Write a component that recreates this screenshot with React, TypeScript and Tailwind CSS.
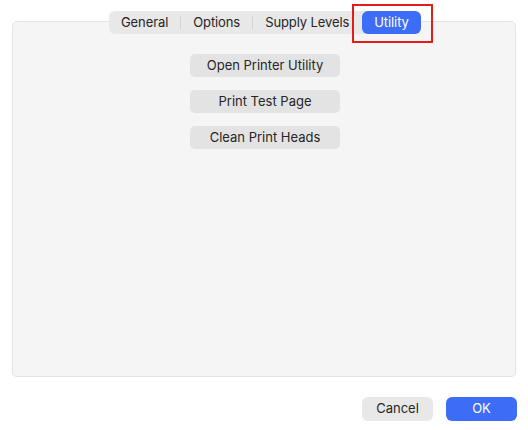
import { useState } from 'react';

const tabs = ['General', 'Options', 'Supply Levels', 'Utility'];
const actions = ['Open Printer Utility', 'Print Test Page', 'Clean Print Heads'];

export default function App() {
  const [active, setActive] = useState('Utility');

  return (
    <div className="w-[528px] h-[430px] bg-white relative font-['Inter','Liberation_Sans',sans-serif] text-[13px] text-[#262626]">
      <div className="pt-[21px] px-[12px]">
        <div className="relative h-[356px] bg-[#f5f5f5] border border-[#e3e3e3] rounded-[5px]">
          {/* tab strip */}
          <div className="absolute left-[96px] top-[-11px] flex items-center h-[23px] bg-[#e8e8e8] rounded-[6px]">
            {tabs.map((t, i) => {
              const on = t === active;
              const prevOn = i > 0 && tabs[i - 1] === active;
              return (
                <div key={t} className="flex items-center h-full">
                  {i > 0 && (
                    <div className={`w-px h-[13px] ${on || prevOn ? 'bg-transparent' : 'bg-[#d4d4d4]'}`} />
                  )}
                  <button
                    onClick={() => setActive(t)}
                    className={`h-[23px] rounded-[6px] leading-[23px] tracking-[-0.1px] ${on ? 'bg-[#3d6df6] text-white px-[12px]' : 'px-[12px]'}`}
                  >
                    {t}
                  </button>
                </div>
              );
            })}
          </div>
          {active === 'Utility' && (
            <div className="absolute left-[339px] top-[-18px] w-[81px] h-[39px] border-2 border-[#e21b1b]" />
          )}

          <div className="flex flex-col items-center gap-[13px] pt-[32px] pl-[2px]">
            {actions.map(a => (
              <button key={a} className="w-[150px] h-[23px] rounded-[5px] bg-[#e3e3e3] text-[#262626]">
                {a}
              </button>
            ))}
          </div>
        </div>
      </div>

      <div className="flex justify-end gap-[13px] pr-[11px] pt-[20px]">
        <button className="w-[71px] h-[24px] rounded-[6px] bg-[#e8e8e8] text-[#262626]">Cancel</button>
        <button className="w-[71px] h-[24px] rounded-[6px] bg-[#3d6df6] text-white">OK</button>
      </div>
    </div>
  );
}
